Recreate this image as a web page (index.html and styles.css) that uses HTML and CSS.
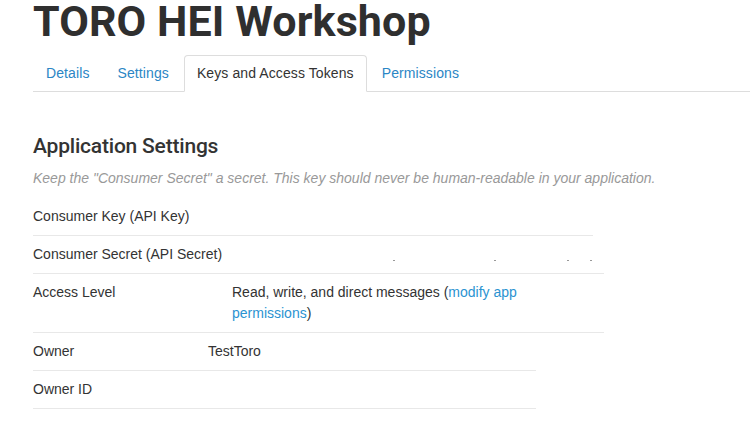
FILE: index.html
```html
<!DOCTYPE html>
<html lang="en">
<head>
<meta charset="utf-8">
<title>TORO HEI Workshop</title>
<link rel="stylesheet" href="styles.css">
</head>
<body>
<div class="page">
  <h1 class="app-title">TORO HEI Workshop</h1>
  <ul class="tabs">
    <li class="tab"><a href="#">Details</a></li>
    <li class="tab"><a href="#">Settings</a></li>
    <li class="tab tab--active"><a href="#">Keys and Access Tokens</a></li>
    <li class="tab"><a href="#">Permissions</a></li>
  </ul>

  <h2 class="section-title">Application Settings</h2>
  <p class="hint">Keep the "Consumer Secret" a secret. This key should never be human-readable in your application.</p>

  <div class="row row--key">
    <span class="label">Consumer Key (API Key)</span>
  </div>
  <div class="row row--wide">
    <span class="label label--secret">Consumer Secret (API Secret)</span>
    <span class="dots"><i></i><i></i><i></i><i></i></span>
  </div>
  <div class="row row--wide">
    <span class="label label--access">Access Level</span>
    <span class="value value--access">Read, write, and direct messages (<a href="#">modify app permissions</a>)</span>
  </div>
  <div class="row row--short">
    <span class="label label--owner">Owner</span>
    <span class="value">TestToro</span>
  </div>
  <div class="row row--short">
    <span class="label label--owner">Owner ID</span>
  </div>
</div>
</body>
</html>
```

FILE: styles.css
```css
html, body {
  margin: 0;
  padding: 0;
  background: #fff;
}

body {
  font-family: "Liberation Sans", Arial, sans-serif;
  font-size: 14px;
  color: #333;
}

.page {
  padding: 0 0 0 33px;
}

.app-title {
  margin: 0;
  font-family: Roboto, "Liberation Sans", sans-serif;
  font-weight: 700;
  font-size: 43px;
  line-height: 42px;
  color: #2f2f2f;
  letter-spacing: 0.1px;
}

.tabs {
  list-style: none;
  margin: 13px 0 0;
  padding: 0;
  display: flex;
  border-bottom: 1px solid #ddd;
}

.tab {
  margin-bottom: -1px;
  margin-right: 2px;
}

.tab a {
  display: block;
  padding: 8px 12px;
  line-height: 19px;
  font-size: 14px;
  letter-spacing: 0.1px;
  color: #2b86c5;
  text-decoration: none;
  border: 1px solid transparent;
  border-radius: 4px 4px 0 0;
}

.tab--active a {
  color: #333;
  background: #fff;
  border-color: #ddd #ddd transparent;
}

.section-title {
  margin: 41px 0 0;
  font-family: Roboto, "Liberation Sans", sans-serif;
  font-weight: 500;
  font-size: 21px;
  letter-spacing: -0.2px;
  line-height: 26px;
  color: #333;
}

.hint {
  margin: 10px 0 0;
  font-style: italic;
  color: #999;
  line-height: 18px;
}

.row {
  display: flex;
  align-items: flex-start;
  padding: 8px 0;
  line-height: 21px;
  border-bottom: 1px solid #e8e8e8;
  box-sizing: border-box;
}

.row--key {
  width: 560px;
  margin-top: 11px;
}

.row--wide {
  width: 571px;
}

.row--short {
  width: 503px;
}

.label {
  flex: none;
}

.label--secret {
  width: 360px;
}

.label--access {
  width: 199px;
}

.label--owner {
  width: 175px;
}

.value--access {
  width: 300px;
}

.value a {
  color: #2b93d1;
  text-decoration: none;
}

.dots {
  display: flex;
  padding-top: 16px;
}

.dots i {
  display: block;
  width: 2px;
  height: 1px;
  background: #999;
}

.dots i:nth-child(2) {
  margin-left: 99px;
}

.dots i:nth-child(3) {
  margin-left: 71px;
}

.dots i:nth-child(4) {
  margin-left: 21px;
}
```
